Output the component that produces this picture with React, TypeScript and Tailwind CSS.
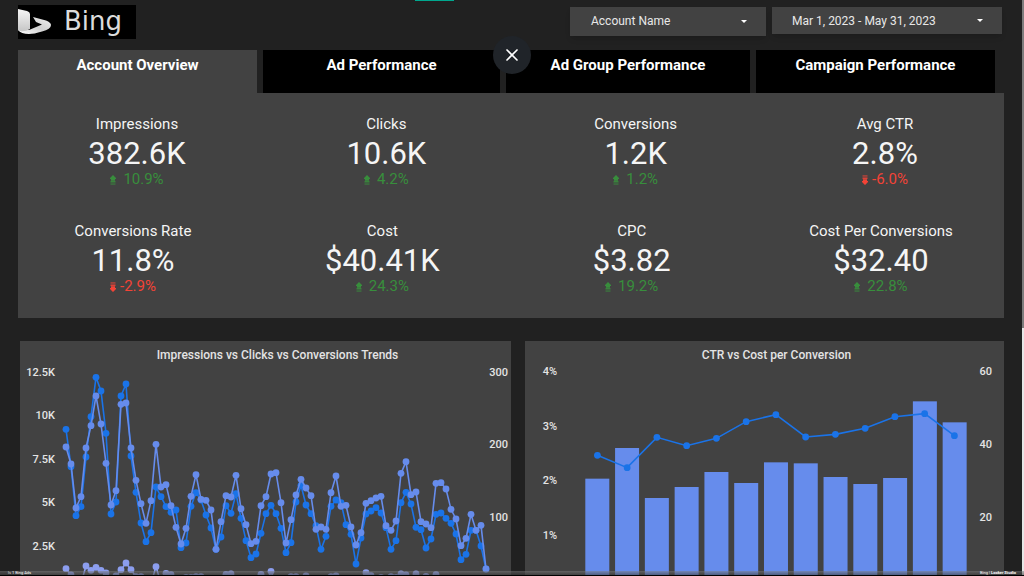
import type { ReactNode } from "react";
import { X } from "lucide-react";

type Kpi = { label: string; value: string; change: string; up: boolean };

const TABS = [
  { label: "Account Overview", className: "flex-[239] bg-[#424242]" },
  { label: "Ad Performance", className: "flex-[237] bg-black" },
  { label: "Ad Group Performance", className: "flex-[244] bg-black" },
  { label: "Campaign Performance", className: "flex-[239] bg-black" },
];

const TOP_KPIS: Kpi[] = [
  { label: "Impressions", value: "382.6K", change: "10.9%", up: true },
  { label: "Clicks", value: "10.6K", change: "4.2%", up: true },
  { label: "Conversions", value: "1.2K", change: "1.2%", up: true },
  { label: "Avg CTR", value: "2.8%", change: "-6.0%", up: false },
];

const BOTTOM_KPIS: Kpi[] = [
  { label: "Conversions Rate", value: "11.8%", change: "-2.9%", up: false },
  { label: "Cost", value: "$40.41K", change: "24.3%", up: true },
  { label: "CPC", value: "$3.82", change: "19.2%", up: true },
  { label: "Cost Per Conversions", value: "$32.40", change: "22.8%", up: true },
];

// Daily series, in thirds of a chart unit measured down from the top of the card.
const IMPRESSIONS = [
  268, 380, 527, 500, 351, 230, 112, 153, 280, 522, 486, 168, 132, 348, 457, 549, 605, 578, 441, 470, 500, 517, 510,
  623, 609, 499, 458, 480, 525, 564, 628, 591, 497, 520, 461, 535, 602, 653, 642, 580, 521, 496, 521, 565, 638, 608,
  486, 436, 495, 521, 557, 628, 589, 499, 480, 488, 554, 583, 672, 594, 522, 513, 503, 519, 563, 628, 602, 488, 457,
  492, 562, 569, 624, 597, 523, 519, 535, 550, 582, 659, 643, 571, 571, 618, 687,
];

const CLICKS = [
  321, 372, 504, 470, 324, 257, 168, 252, 370, 495, 452, 193, 189, 324, 421, 491, 550, 482, 313, 441, 434, 497, 562,
  612, 565, 469, 404, 478, 481, 510, 628, 545, 467, 471, 406, 506, 554, 611, 604, 497, 470, 402, 398, 488, 609, 539,
  465, 418, 444, 467, 568, 561, 568, 458, 408, 499, 496, 561, 615, 578, 490, 482, 474, 469, 557, 571, 543, 400, 365,
  464, 456, 545, 552, 563, 430, 428, 447, 508, 537, 617, 595, 523, 571, 556, 687,
];

const CONVERSIONS = [
  686, 705, 730, 730, 678, 691, 682, 691, 699, 730, 708, 689, 669, 689, 710, 710, 730, 730, 680, 730, 700, 704, 730,
  730, 712, 712, 710, 710, 730, 730, 730, 730, 703, 702, 730, 730, 730, 730, 730, 703, 730, 694, 730, 730, 730, 710,
  710, 730, 708, 730, 730, 730, 730, 710, 708, 730, 730, 730, 730, 730, 698, 707, 730, 712, 730, 710, 712, 702, 705,
  730, 702, 730, 709, 730, 704, 730, 730, 730, 730, 730, 730, 730, 730, 730, 730,
];

const COST_BARS = [416, 324, 474, 441, 396, 429, 367, 370, 411, 432, 414, 184, 247];
const CTR_LINE = [346, 383, 292, 317, 295, 245, 224, 291, 283, 265, 230, 221, 287];

type SeriesProps = { values: number[]; color: string; x0: number; step: number };

function Series({ values, color, x0, step }: SeriesProps) {
  const pts = values.map((v, i) => [x0 + i * step, v / 3 - 1]);
  return (
    <g fill={color}>
      <polyline points={pts.map((p) => p.join(",")).join(" ")} fill="none" stroke={color} strokeWidth="1.6" />
      {pts.map(([x, y], i) => (
        <circle key={i} cx={x} cy={y} r="3.4" />
      ))}
    </g>
  );
}

function BingLogo() {
  return (
    <svg viewBox="0 0 118 34" className="h-[34px] w-[118px] bg-black" role="img" aria-label="Bing">
      <defs>
        <linearGradient id="stem" x1="0" y1="0" x2="0" y2="1">
          <stop offset="0" stopColor="#f6f6f6" />
          <stop offset="1" stopColor="#c6c6c6" />
        </linearGradient>
        <linearGradient id="sweep" x1="0" y1="1" x2="1" y2="0">
          <stop offset="0" stopColor="#ffffff" />
          <stop offset="0.5" stopColor="#d0d0d0" />
          <stop offset="1" stopColor="#f2f2f2" />
        </linearGradient>
      </defs>
      <path d="M15 12 L28 15.500 Q33 17.500 33 20 Q33 24 24 26.500 Q16 29 11 29 Q3 29 0 25 L11 25 L24 19.500 L18 17 Z" fill="url(#sweep)" />
      <path d="M0 4 L9 6 Q12 7 12 9 V24 Q7 27 2 26 L0 25 Z" fill="url(#stem)" />
      <text x="46" y="25" fontSize="26" fill="#dcdcdc" fontFamily="'DejaVu Sans', 'Noto Sans', sans-serif">
        Bing
      </text>
    </svg>
  );
}

function TrendArrow({ up }: { up: boolean }) {
  return (
    <svg viewBox="0 0 6 10" className={`mt-[2px] h-[10px] w-[6px] ${up ? "" : "rotate-180"}`} fill="currentColor" aria-hidden="true">
      <path d="M3 0 L6 3 V4 H5 V5.700 H1 V4 H0 V3 Z" />
      <rect x="0.500" y="6" width="5" height="1.300" opacity="0.850" />
      <rect x="0.500" y="7.600" width="5" height="1" opacity="0.700" />
      <rect x="0.500" y="9" width="5" height="1" opacity="0.500" />
    </svg>
  );
}

function Scorecard({ label, value, change, up }: Kpi) {
  return (
    <div className="flex w-40 flex-col items-center whitespace-nowrap text-[#f5f5f5]">
      <span className="text-[15px] leading-5">{label}</span>
      <span className="pt-px text-[31px] leading-[38px]">{value}</span>
      <span
        className={`-mt-[3px] flex items-center text-[15px] leading-[18px] ${
          up ? "gap-[7px] text-[#388e3c]" : "gap-1 text-[#f44336]"
        }`}
      >
        <TrendArrow up={up} />
        {change}
      </span>
    </div>
  );
}

function ChartCard({ title, className, children }: { title: string; className: string; children: ReactNode }) {
  return (
    <section className={`relative bg-[#424242] ${className}`}>
      <h2 className="absolute inset-x-0 top-[6px] pl-6 text-center text-[12px] leading-4 font-medium text-[#e4e4e4]">{title}</h2>
      {children}
    </section>
  );
}

export default function App() {
  return (
    <div className="relative h-screen overflow-hidden bg-[#212121] pr-5 pl-[18px] font-[Roboto,sans-serif]">
      <div className="absolute top-0 left-[415px] h-px w-[39px] bg-[#00a78e]" />

      <header className="flex h-[50px] items-start">
        <div className="pt-[5px]">
          <BingLogo />
        </div>
        <div className="ml-auto flex items-start gap-[6px] pt-[7px] pr-[2px]">
          <button className="flex h-[29px] w-[196px] items-center justify-between bg-[#424242] pr-[19px] pb-px pl-[21px] text-[12px] text-[#e8e8e8] shadow-md">
            Account Name
            <span className="border-x-[3px] border-t-[3px] border-x-transparent border-t-white" />
          </button>
          <button className="flex h-[27px] w-[230px] items-center justify-between bg-[#424242] pr-[19px] pl-[20px] text-[12px] text-[#e8e8e8] shadow-md">
            Mar 1, 2023 - May 31, 2023
            <span className="border-x-[3px] border-t-[3px] border-x-transparent border-t-white" />
          </button>
        </div>
      </header>

      <nav className="flex gap-[6px] pr-[9px]">
        {TABS.map((t) => (
          <button
            key={t.label}
            className={`flex h-[43px] items-start justify-center pt-[5px] text-[15px] leading-5 font-bold whitespace-nowrap text-white ${t.className}`}
          >
            {t.label}
          </button>
        ))}
      </nav>

      <main>
        <section className="h-[225px] bg-[#424242] pt-[21px]">
          <div className="flex justify-between pr-[39px] pl-[39px]">
            {TOP_KPIS.map((k) => (
              <Scorecard key={k.label} {...k} />
            ))}
          </div>
          <div className="mt-[33px] flex justify-between pr-[43px] pl-[35px]">
            {BOTTOM_KPIS.map((k) => (
              <Scorecard key={k.label} {...k} />
            ))}
          </div>
        </section>

        <div className="mt-[23px] flex gap-[14px] pl-[2px]">
          <ChartCard title="Impressions vs Clicks vs Conversions Trends" className="flex-[491]">
            <svg viewBox="0 0 491 240" className="block w-full" fontSize="11" fontWeight="500" fill="#e4e4e4">
              {["12.5K", "10K", "7.5K", "5K", "2.5K"].map((t, i) => (
                <text key={t} x="35" y={35 + i * 43.4} textAnchor="end">
                  {t}
                </text>
              ))}
              {["300", "200", "100"].map((t, i) => (
                <text key={t} x="488" y={35 + i * 72.4} textAnchor="end">
                  {t}
                </text>
              ))}
              <Series values={IMPRESSIONS} color="#1a73e8" x0={46} step={5} />
              <Series values={CLICKS} color="#668cec" x0={46} step={5} />
              <Series values={CONVERSIONS} color="#8c9eef" x0={46} step={5} />
            </svg>
          </ChartCard>

          <ChartCard title="CTR vs Cost per Conversion" className="flex-[479]">
            <svg viewBox="0 0 479 240" className="block w-full" fontSize="11" fontWeight="500" fill="#e4e4e4">
              {["4%", "3%", "2%", "1%"].map((t, i) => (
                <text key={t} x="32" y={34 + i * 54.5} textAnchor="end">
                  {t}
                </text>
              ))}
              {["60", "40", "20"].map((t, i) => (
                <text key={t} x="467" y={34 + i * 73} textAnchor="end">
                  {t}
                </text>
              ))}
              {COST_BARS.map((v, i) => (
                <rect key={i} x={60.3 + i * 29.78} y={v / 3 - 1} width="24" height={241 - v / 3} fill="#668cec" />
              ))}
              <Series values={CTR_LINE} color="#1a73e8" x0={72.4} step={29.75} />
            </svg>
          </ChartCard>
        </div>
      </main>

      <button
        aria-label="Close"
        className="absolute top-9 left-[493px] flex h-[38px] w-[38px] items-center justify-center rounded-full bg-[#202429] text-white"
      >
        <X className="h-5 w-5" strokeWidth={2} />
      </button>

      {/* scroll track */}
      <div className="absolute inset-y-0 right-0 w-[2px] bg-[#e6e6e6]">
        <div className="h-[57%] bg-[#7d7d7d]" />
      </div>

      <footer className="absolute inset-x-0 bottom-0 flex h-[5px] items-center justify-between border-b border-black bg-linear-to-b from-[#808080]/50 to-[#404040]/60 px-2 text-[4px] leading-none text-white">
        <span>|&lt; 1 Bing Ads</span>
        <span>
          Bing | <b>Looker Studio</b>
        </span>
      </footer>
    </div>
  );
}
